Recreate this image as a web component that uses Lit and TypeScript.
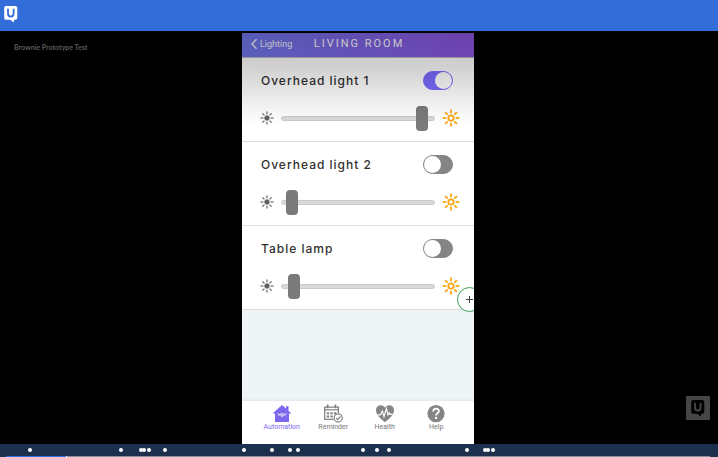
import { LitElement, html, css, svg } from "lit";
import { customElement, property } from "lit/decorators.js";

const rays = [0, 45, 90, 135, 180, 225, 270, 315];

const tabIcons: Record<string, unknown> = {
  automation: svg`
    <path d="M10 1 0.5 9.5H3V18H17V9.5H19.5L16.5 6.8V2.2H14V4.6Z" fill="#7b68ee"/>
    <path d="M5.4 9.4Q10 13.4 14.6 9.4M6.4 11.4Q10 7.8 13.6 11.4" fill="none" stroke="#fff" stroke-width="0.8"/>
    <circle cx="10" cy="12.2" r="0.8" fill="#fff"/>`,
  reminder: svg`
    <path d="M10.5 15.4H1.7V3.2H15.4V9" fill="none" stroke="#808080" stroke-width="1.3"/>
    <path d="M1.2 5.8H16" stroke="#808080" stroke-width="1.2"/>
    <path d="M4.6 0.6V4.2M12.4 0.6V4.2" stroke="#808080" stroke-width="1.7"/>
    <path d="M3.8 8.2h2.3v2H3.8zM7.4 8.2h2.3v2H7.4zM11 8.2h2.3v2H11zM3.8 11.6h2.3v2H3.8zM7.4 11.6h2.3v2H7.4z" fill="#808080"/>
    <circle cx="15.2" cy="14" r="4.1" fill="#fff" stroke="#808080" stroke-width="1.2"/>
    <path d="M13.1 14.1 14.7 15.6 17.4 12.4" fill="none" stroke="#808080" stroke-width="1.2"/>`,
  health: svg`
    <path d="M10 18.2C7 15.6 1 11.4 1 6.2 1 3 3.3 1.2 5.7 1.2 7.6 1.2 9.2 2.2 10 3.8 10.8 2.2 12.4 1.2 14.3 1.2 16.7 1.2 19 3 19 6.2 19 11.4 13 15.6 10 18.2Z" fill="#858585"/>
    <path d="M2.4 10.8H5.4L7.4 7 9 12.6 11.4 4.6 13 10.8 14.4 8.8 15.2 10.4H17.6" fill="none" stroke="#fff" stroke-width="1.2"/>`,
  help: svg`
    <circle cx="10" cy="9.6" r="8.6" fill="#858585"/>
    <path d="M7.2 7.6C7.2 5.6 8.4 4.6 10.1 4.6 11.8 4.6 12.9 5.7 12.9 7.2 12.9 9.2 10.1 9.1 10.1 11.6" fill="none" stroke="#fff" stroke-width="1.8"/>
    <circle cx="10.1" cy="13.9" r="1.2" fill="#fff"/>`,
};

@customElement("sun-icon")
class SunIcon extends LitElement {
  @property({ type: Boolean }) bright = false;

  static styles = css`
    :host { display: block; flex: none; width: 14px; height: 14px; color: #606060; }
    :host([bright]) { width: 18px; height: 18px; color: #f9a50f; }
    svg { display: block; width: 100%; height: 100%; }
  `;

  render() {
    return html`<svg viewBox="-9 -9 18 18" fill="none" stroke="currentColor" aria-hidden="true">
      ${this.bright
        ? svg`<circle r="2.7" stroke-width="1.7"/>`
        : svg`<circle r="3" fill="currentColor"/>`}
      ${rays.map((a) => svg`<path d="M0 -4.7V-8.4" stroke-width=${this.bright ? 1.8 : 1.5} transform="rotate(${a})"/>`)}
    </svg>`;
  }
}

@customElement("speech-logo")
class SpeechLogo extends LitElement {
  static styles = css`
    :host { display: block; width: 14px; height: 17px; --letter: #326dd9; color: #fff; }
    svg { display: block; width: 100%; height: 100%; }
    .u { fill: none; stroke: var(--letter); stroke-width: 1.8; }
  `;

  render() {
    return html`<svg viewBox="0 0 14 17" aria-hidden="true">
      <path fill="currentColor" d="M2.4 0H11C12.5 0 13.3 0.8 13.3 2.3V11.4C13.3 12.9 12.5 13.7 11 13.7H10V16.6L6 13.7H2.4C0.9 13.7 0.2 12.9 0.2 11.4V2.3C0.2 0.8 0.9 0 2.4 0Z"/>
      <path class="u" d="M4 2.8V7.6C4 9.6 5 10.6 6.8 10.6 8.6 10.6 9.6 9.6 9.6 7.6V2.8"/>
    </svg>`;
  }
}

@customElement("light-row")
class LightRow extends LitElement {
  @property() name = "";
  @property({ type: Boolean }) on = false;
  @property({ type: Number }) level = 0;

  static styles = css`
    :host {
      display: flex;
      flex-direction: column;
      gap: 13px;
      padding: 10px 14px 10px 19px;
      border-bottom: 1px solid #dedede;
      background: #fff;
    }
    .head { display: flex; align-items: center; justify-content: space-between; height: 24px; padding-right: 7px; }
    .name { padding-top: 2px; font-size: 12px; line-height: 22px; font-weight: 500; letter-spacing: 1px; color: #303030; }
    .toggle {
      appearance: none;
      box-sizing: border-box;
      display: flex;
      width: 30px;
      height: 19px;
      margin: 0;
      border: 1px solid #858585;
      border-radius: 10px;
      background: #858585;
    }
    .toggle::before { content: ""; width: 17px; height: 17px; border-radius: 50%; background: #fff; }
    .toggle:checked { justify-content: flex-end; border-color: #7b6bff; background: #7b6bff; }
    .slider { display: flex; align-items: center; height: 26px; }
    .range { appearance: none; flex: 1; min-width: 0; height: 26px; margin: 0 7px; background: none; }
    .range::-webkit-slider-runnable-track {
      box-sizing: border-box;
      height: 5px;
      border: 1px solid #cacaca;
      border-radius: 3px;
      background: #d9d9d9;
    }
    .range::-webkit-slider-thumb {
      appearance: none;
      width: 12px;
      height: 25px;
      margin-top: -11px;
      border-radius: 4px;
      background: #7a7a7a;
    }
    .dim { margin-left: -1px; }
  `;

  render() {
    return html`
      <div class="head">
        <label class="name" for="power">${this.name}</label>
        <input class="toggle" id="power" type="checkbox" .checked=${this.on} />
      </div>
      <div class="slider">
        <sun-icon class="dim"></sun-icon>
        <input class="range" type="range" min="0" max="200" .value=${String(this.level)} aria-label="${this.name} brightness" />
        <sun-icon bright></sun-icon>
      </div>`;
  }
}

@customElement("app-root")
class AppRoot extends LitElement {
  private lights = [
    { name: "Overhead light 1", on: true, level: 192 },
    { name: "Overhead light 2", on: false, level: 6 },
    { name: "Table lamp", on: false, level: 8 },
  ];
  private tabs = [
    { id: "automation", label: "Automation" },
    { id: "reminder", label: "Reminder" },
    { id: "health", label: "Health" },
    { id: "help", label: "Help" },
  ];
  private marks = [30, 121, 141, 144, 149, 165, 244, 272, 290, 298, 363, 377, 389, 467, 485, 488, 493];
  private duration = 718;

  static styles = css`
    :host {
      display: flex;
      flex-direction: column;
      min-height: 100vh;
      background: #000;
      font-family: Inter, "Liberation Sans", sans-serif;
    }
    button { font: inherit; }
    .top { flex: none; height: 25px; padding: 6px 0 0 4px; background: #326dd9; }
    .stage {
      position: relative;
      flex: 1;
      display: grid;
      grid-template-columns: 1fr minmax(0, 232px) 1fr;
      padding: 2px 2px 0 0;
    }
    .project { margin: 0; padding: 10px 0 0 14px; font: 700 7px/9px Lato, sans-serif; color: #5a5a5a; }
    .phone { position: relative; display: flex; flex-direction: column; overflow: hidden; background: #eff5f6; }
    .shade {
      position: absolute;
      inset: 0 0 auto;
      height: 92px;
      background: linear-gradient(rgba(0, 0, 0, 0.24), rgba(0, 0, 0, 0.18) 38%, rgba(0, 0, 0, 0.06) 78%, transparent);
      pointer-events: none;
    }
    .bar {
      flex: none;
      display: grid;
      grid-template-columns: 1fr auto 1fr;
      align-items: center;
      height: 24px;
      padding: 0 6px 0 8px;
      border-bottom: 1px solid #bbb;
      background: linear-gradient(90deg, #7077eb, #8d55e2);
      color: #fff;
      font-family: Roboto, sans-serif;
    }
    .back { display: flex; align-items: center; gap: 2px; padding: 0 0 2px; border: 0; background: none; color: #f2f2ff; font-size: 9px; line-height: 12px; }
    .back svg { width: 8px; height: 12px; }
    .room { margin: 0; padding-bottom: 2px; font-size: 11px; line-height: 14px; font-weight: 400; letter-spacing: 2px; }
    .tabs {
      display: flex;
      height: 43px;
      margin-top: auto;
      padding: 0 12px 0 14px;
      background: #fff;
      box-shadow: 0 -1px 3px #dde3e4;
      font-family: Roboto, sans-serif;
    }
    .tab {
      flex: 1;
      display: flex;
      flex-direction: column;
      align-items: center;
      padding: 3px 0 0;
      border: 0;
      background: none;
      color: #777;
      font-size: 7px;
      line-height: 8px;
    }
    .tab svg { width: 20px; height: 19px; overflow: visible; }
    .tab.active { color: #7b68ee; }
    .add {
      position: absolute;
      right: -8px;
      bottom: 132px;
      width: 25px;
      height: 25px;
      padding: 0;
      border: 1px solid #3f9f55;
      border-radius: 50%;
      background: #fff;
    }
    .add svg { display: block; width: 7px; height: 7px; margin: auto; }
    .badge {
      position: absolute;
      right: 8px;
      bottom: 24px;
      display: grid;
      place-items: center;
      width: 24px;
      height: 24px;
      padding: 0;
      border: 0;
      border-radius: 1px;
      background: #464646;
    }
    .badge speech-logo { color: #000; --letter: #464646; }
    .timeline { position: relative; flex: none; height: 13px; background: #1c304d; }
    .mark { position: absolute; top: 4px; width: 4px; height: 4px; margin-left: -2px; border-radius: 50%; background: #fff; }
    .track { position: absolute; inset: auto 8px 0 6px; display: flex; height: 1px; background: #8790a0; }
    .played { border-right: 1px solid #fff; background: #326dd9; }
  `;

  render() {
    return html`
      <header class="top"><speech-logo></speech-logo></header>
      <main class="stage">
        <p class="project">Brownie Prototype Test</p>
        <section class="phone">
          <header class="bar">
            <button class="back">
              <svg viewBox="0 0 8 12" fill="none" stroke="currentColor" stroke-width="1.4" aria-hidden="true"><path d="M6.5 1.2 2 6 6.5 10.8"/></svg>
              Lighting
            </button>
            <h1 class="room">LIVING ROOM</h1>
          </header>
          ${this.lights.map((l) => html`<light-row name=${l.name} ?on=${l.on} level=${l.level}></light-row>`)}
          <nav class="tabs">
            ${this.tabs.map(
              (t, i) => html`<button class="tab ${i === 0 ? "active" : ""}">
                <svg viewBox="0 0 20 19" aria-hidden="true">${tabIcons[t.id]}</svg>
                ${t.label}
              </button>`
            )}
          </nav>
          <button class="add" aria-label="Add">
            <svg viewBox="0 0 7 7" stroke="#444" aria-hidden="true"><path d="M3.5 0V7M0 3.5H7"/></svg>
          </button>
          <div class="shade"></div>
        </section>
        <button class="badge" aria-label="Feedback"><speech-logo></speech-logo></button>
      </main>
      <footer class="timeline">
        ${this.marks.map((m) => html`<span class="mark" style="left:${(m / this.duration) * 100}%"></span>`)}
        <div class="track"><span class="played" style="width:${(60 / 704) * 100}%"></span></div>
      </footer>`;
  }
}
